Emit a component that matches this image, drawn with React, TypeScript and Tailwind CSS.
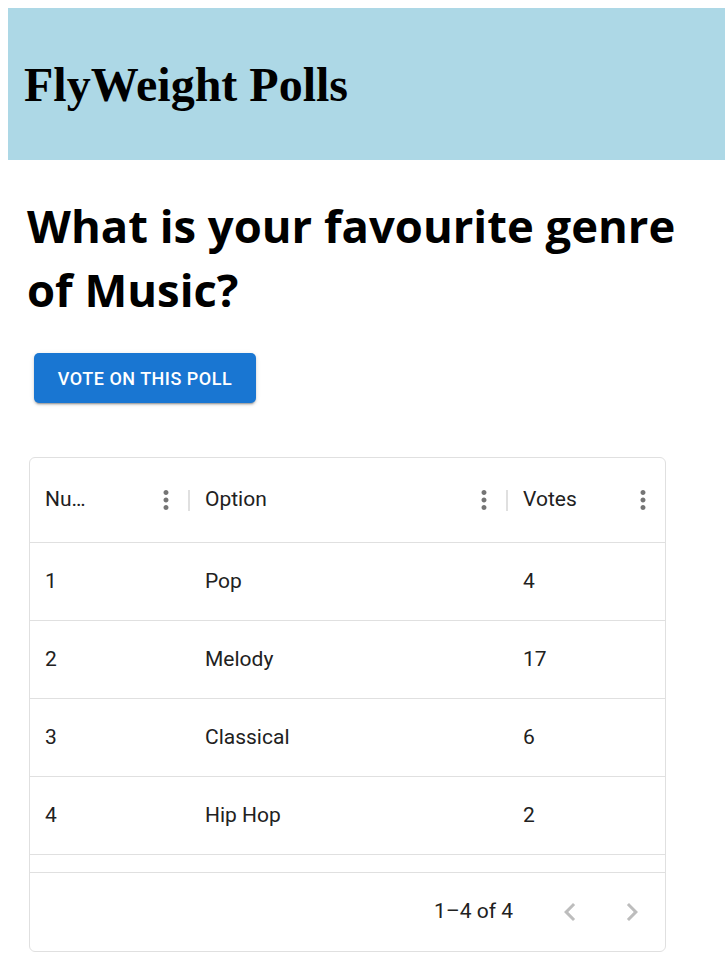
const rows = [
  { id: 1, option: "Pop", votes: 4 },
  { id: 2, option: "Melody", votes: 17 },
  { id: 3, option: "Classical", votes: 6 },
  { id: 4, option: "Hip Hop", votes: 2 },
];

function MoreVert() {
  return (
    <svg viewBox="0 0 24 24" className="w-[30px] h-[30px] shrink-0" fill="#757575">
      <path d="M12 8c1.1 0 2-.9 2-2s-.9-2-2-2-2 .9-2 2 .9 2 2 2zm0 2c-1.1 0-2 .9-2 2s.9 2 2 2 2-.9 2-2-.9-2-2-2zm0 6c-1.1 0-2 .9-2 2s.9 2 2 2 2-.9 2-2-.9-2-2-2z" />
    </svg>
  );
}

function HeaderCell({ title, width, titleWidth }: { title: string; width: string; titleWidth?: string }) {
  return (
    <div className={`${width} flex items-center h-full pl-[15px] shrink-0`}>
      <div className="flex-1 min-w-0">
        <div className={`truncate ${titleWidth ?? ""}`}>{title}</div>
      </div>
      <MoreVert />
      <div className="w-[7px]" />
      <div className="w-[2px] h-[21px] bg-[#e0e0e0]" />
    </div>
  );
}

function Chevron({ dir }: { dir: "left" | "right" }) {
  return (
    <div className="w-[60px] h-[60px] flex items-center justify-center">
      <svg viewBox="0 0 24 24" className="w-[36px] h-[36px]" fill="#bdbdbd">
        {dir === "left" ? (
          <path d="M15.41 16.59 10.83 12l4.58-4.59L14 6l-6 6 6 6 1.41-1.41z" />
        ) : (
          <path d="M8.59 16.59 13.17 12 8.59 7.41 10 6l6 6-6 6-1.41-1.41z" />
        )}
      </svg>
    </div>
  );
}

export default function App() {
  return (
    <div className="pt-2 pl-2 bg-white min-h-screen">
      <header className="h-[152px] bg-[#add8e6] flex items-center pl-4">
        <h1 className="text-[48px] font-bold text-black leading-[55px] font-['Liberation_Serif',serif]">
          FlyWeight Polls
        </h1>
      </header>

      <main className="pl-[19px] pt-[33px]">
        <h2 className="text-[45.4px] leading-[64px] font-bold text-black font-['Open_Sans',sans-serif]">
          What is your favourite genre
          <br />
          of Music?
        </h2>

        <button className="mt-8 ml-[7px] w-[222px] h-[50px] rounded-[5px] bg-[#1976d2] text-white text-[18px] font-medium tracking-[0.5px] font-['Roboto',sans-serif] shadow-[0_3px_1px_-2px_rgba(0,0,0,0.2),0_2px_2px_0_rgba(0,0,0,0.14),0_1px_5px_0_rgba(0,0,0,0.12)]">
          VOTE ON THIS POLL
        </button>

        <div className="mt-[54px] ml-[2px] w-[637px] border border-[#e0e0e0] rounded-[6px] overflow-hidden font-['Roboto',sans-serif] text-[21px] text-[#212121]">
          <div className="h-[85px] flex border-b border-[#e0e0e0]">
            <HeaderCell title="Number" width="w-[160px]" titleWidth="max-w-[42px]" />
            <HeaderCell title="Option" width="w-[318px]" />
            <HeaderCell title="Votes" width="w-[159px]" />
          </div>

          {rows.map((r) => (
            <div key={r.id} className="h-[78px] flex items-center border-b border-[#e0e0e0]">
              <div className="w-[160px] pl-[15px]">{r.id}</div>
              <div className="w-[318px] pl-[15px]">{r.option}</div>
              <div className="flex-1 pl-[15px]">{r.votes}</div>
            </div>
          ))}

          <div className="h-[18px] border-b border-[#e0e0e0]" />

          <div className="h-[78px] flex items-center justify-end pr-[3px]">
            <span>1–4 of 4</span>
            <div className="flex ml-[27px] gap-[2px]">
              <Chevron dir="left" />
              <Chevron dir="right" />
            </div>
          </div>
        </div>
      </main>
    </div>
  );
}
